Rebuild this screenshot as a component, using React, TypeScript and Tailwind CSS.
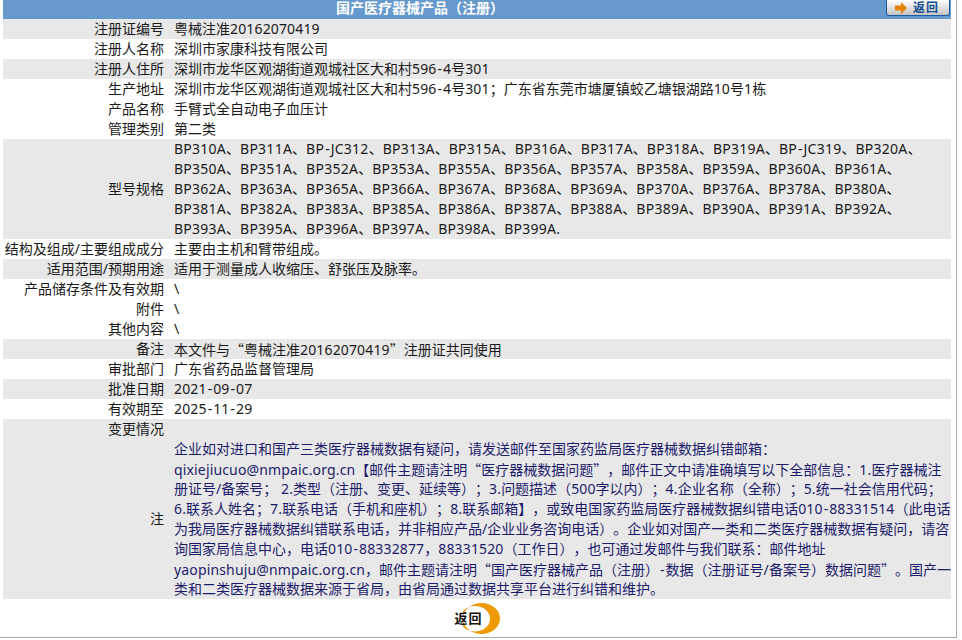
const rows: { label: string; value?: string[]; gray?: boolean }[] = [
  { label: "注册证编号", value: ["粤械注准20162070419"], gray: true },
  { label: "注册人名称", value: ["深圳市家康科技有限公司"] },
  { label: "注册人住所", value: ["深圳市龙华区观湖街道观城社区大和村596-4号301"], gray: true },
  { label: "生产地址", value: ["深圳市龙华区观湖街道观城社区大和村596-4号301；广东省东莞市塘厦镇蛟乙塘银湖路10号1栋"] },
  { label: "产品名称", value: ["手臂式全自动电子血压计"] },
  { label: "管理类别", value: ["第二类"] },
  {
    label: "型号规格",
    gray: true,
    value: [
      "BP310A、BP311A、BP-JC312、BP313A、BP315A、BP316A、BP317A、BP318A、BP319A、BP-JC319、BP320A、",
      "BP350A、BP351A、BP352A、BP353A、BP355A、BP356A、BP357A、BP358A、BP359A、BP360A、BP361A、",
      "BP362A、BP363A、BP365A、BP366A、BP367A、BP368A、BP369A、BP370A、BP376A、BP378A、BP380A、",
      "BP381A、BP382A、BP383A、BP385A、BP386A、BP387A、BP388A、BP389A、BP390A、BP391A、BP392A、",
      "BP393A、BP395A、BP396A、BP397A、BP398A、BP399A.",
    ],
  },
  { label: "结构及组成/主要组成成分", value: ["主要由主机和臂带组成。"] },
  { label: "适用范围/预期用途", value: ["适用于测量成人收缩压、舒张压及脉率。"], gray: true },
  { label: "产品储存条件及有效期", value: ["\\"] },
  { label: "附件", value: ["\\"] },
  { label: "其他内容", value: ["\\"] },
  { label: "备注", value: ["本文件与“粤械注准20162070419”注册证共同使用"], gray: true },
  { label: "审批部门", value: ["广东省药品监督管理局"] },
  { label: "批准日期", value: ["2021-09-07"], gray: true },
  { label: "有效期至", value: ["2025-11-29"] },
  { label: "变更情况", gray: true },
];

const note = [
  "企业如对进口和国产三类医疗器械数据有疑问，请发送邮件至国家药监局医疗器械数据纠错邮箱：",
  "qixiejiucuo@nmpaic.org.cn【邮件主题请注明“医疗器械数据问题”，邮件正文中请准确填写以下全部信息：1.医疗器械注",
  "册证号/备案号； 2.类型（注册、变更、延续等）；3.问题描述（500字以内）；4.企业名称（全称）；5.统一社会信用代码；",
  "6.联系人姓名；7.联系电话（手机和座机）；8.联系邮箱】，或致电国家药监局医疗器械数据纠错电话010-88331514（此电话",
  "为我局医疗器械数据纠错联系电话，并非相应产品/企业业务咨询电话）。企业如对国产一类和二类医疗器械数据有疑问，请咨",
  "询国家局信息中心，电话010-88332877，88331520（工作日），也可通过发邮件与我们联系：邮件地址",
  "yaopinshuju@nmpaic.org.cn，邮件主题请注明“国产医疗器械产品（注册）-数据（注册证号/备案号）数据问题”。国产一",
  "类和二类医疗器械数据来源于省局，由省局通过数据共享平台进行纠错和维护。",
];

// the original font has slightly wider latin, a wider hyphen and full width quotes
const Text = ({ children }: { children: string }) => (
  <>
    {children.split(/([“”]|-|[!-~]+?(?=-|[^!-~]|$))/).map((part, i) => {
      if (part === "“" || part === "”") {
        return (
          <span key={i} className="font-['Noto_Sans_CJK_SC']">
            {part}
          </span>
        );
      }
      if (part === "-") {
        return (
          <span key={i} className="px-[1px]">
            {part}
          </span>
        );
      }
      if (/^[!-~]+$/.test(part)) {
        return (
          <span key={i} className={/[A-Z]/.test(part) ? "tracking-[0.25px]" : "tracking-[0.15px]"}>
            {part}
          </span>
        );
      }
      return part;
    })}
  </>
);

const Row = ({ label, lines, gray, navy }: { label: string; lines: string[]; gray?: boolean; navy?: boolean }) => (
  <div className={`flex items-center ${gray ? "bg-[#e8e8e8]" : "bg-white"}`}>
    <div className="w-[161px] h-5 shrink-0 text-right whitespace-nowrap text-[#1a1a1a]">
      <Text>{label}</Text>
    </div>
    <div className={`pl-[10px] whitespace-nowrap ${navy ? "text-[#1c1c6b]" : "text-[#1a1a1a]"}`}>
      {lines.map((line) => (
        <div key={line} className="h-5">
          <Text>{line}</Text>
        </div>
      ))}
    </div>
  </div>
);

export default function App() {
  return (
    <div
      className="w-[957px] h-[638px] bg-white overflow-hidden text-[14px] leading-5 border-r border-b border-[#aaaaaa] [text-spacing-trim:space-all]"
      style={{ fontFamily: '"Noto Sans", "Noto Sans CJK SC", sans-serif' }}
    >
      <div className="ml-[3px] w-[948px]">
        <div className="flex h-[19px] bg-[#6699cc]">
          <div className="w-[834px] text-center font-bold text-white text-[14px] leading-[15px] font-['Noto_Sans_CJK_SC']">
            国产医疗器械产品（注册）
          </div>
          <button className="ml-[49px] h-[16px] w-[64px] flex items-center pl-[8px] gap-[6px] rounded-b-[3px] border border-t-0 border-[#1c5a9c] bg-gradient-to-b from-white to-[#c4c4c4] text-[12px] leading-[14px] font-bold tracking-[1px] text-[#174f91]">
            <svg width="12" height="12" viewBox="0 0 12 12">
              <path d="M0 3.500h6V0l6 6-6 6V8.500H0z" fill="#e8800a" />
            </svg>
            返回
          </button>
        </div>
        {rows.map((r) => (
          <Row key={r.label} label={r.label} lines={r.value ?? [""]} gray={r.gray} />
        ))}
        <Row label="注" lines={note} gray navy />
        <div className="flex justify-center pt-[4px]">
          <div className="relative w-[45px] h-[31px]">
            <svg className="absolute right-0 top-0" width="37" height="31" viewBox="0 0 37 31">
              <path
                fillRule="evenodd"
                d="M18.500 0a18.500 15.500 0 1 1 0 31 18.500 15.500 0 1 1 0-31zM12 3a15 12.750 0 1 0 0 25.500 15 12.750 0 1 0 0-25.500z"
                fill="#ee9a05"
              />
            </svg>
            <span className="absolute left-0 top-[5px] font-bold text-[13px] leading-5 tracking-[1px] text-[#111] whitespace-nowrap">
              返回
            </span>
          </div>
        </div>
      </div>
    </div>
  );
}
